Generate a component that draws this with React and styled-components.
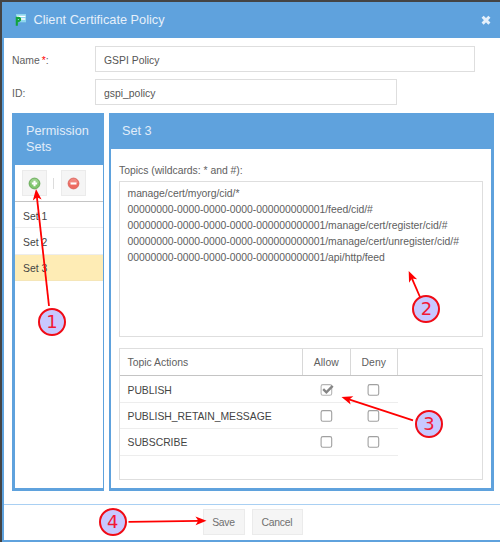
import React, { useState } from "react";
import styled, { createGlobalStyle } from "styled-components";

const GlobalStyle = createGlobalStyle`
  * {
    box-sizing: border-box;
  }

  body {
    margin: 0;
    background-color: #444;
    font-family: "Liberation Sans", Arial, sans-serif;
    font-size: 10.4px;
    color: #606060;
    overflow: hidden;
  }
`;

const Page = styled.div`
  position: relative;
  width: 500px;
  height: 542px;
  padding: 2px 0 0 2px;
`;

const Window = styled.div`
  display: flex;
  flex-direction: column;
  height: 540px;
  border-left: 2px solid #5fa2dd;
  border-bottom: 2px solid #5fa2dd;
  background-color: #fff;
`;

const TitleBar = styled.div`
  display: flex;
  align-items: center;
  height: 36px;
  padding: 0 9px 0 11px;
  background-color: #5fa2dd;
`;

const Title = styled.div`
  flex: 1;
  margin-left: 6.5px;
  font-size: 12.75px;
  line-height: 16px;
  color: #e6f0fa;
`;

const Form = styled.div`
  display: flex;
  flex-direction: column;
  gap: 7px;
  padding: 8px 0 0 8px;
`;

const Field = styled.div`
  display: flex;
  align-items: center;
  height: 26px;
`;

const Label = styled.label`
  width: 83px;
  padding-top: 2px;
`;

const Required = styled.span`
  margin-left: 2px;
  color: #f00;
`;

const Input = styled.input`
  width: ${(props) => props.$width}px;
  height: 26px;
  padding: 2px 8px 0;
  border: 1px solid #dedede;
  outline: none;
  font: inherit;
  color: #555;
`;

const Panels = styled.div`
  display: flex;
  gap: 5px;
  height: 378px;
  margin: 8px 6px 0 8px;
`;

const Panel = styled.div`
  display: flex;
  flex-direction: column;
  ${(props) => (props.$width ? `width: ${props.$width}px;` : "flex: 1;")}
  border: solid #5fa2dd;
  border-width: ${(props) => props.$borders};
`;

const PanelHeader = styled.div`
  height: ${(props) => props.$height}px;
  padding: 10px 0 0 11px;
  background-color: #5fa2dd;
  font-size: 12.7px;
  line-height: 16px;
  color: #e2edf9;
`;

const Toolbar = styled.div`
  display: flex;
  align-items: center;
  height: 37px;
  padding-left: 7px;
  border-bottom: 1px solid #c4c4c4;
`;

const ToolButton = styled.button`
  display: flex;
  align-items: center;
  justify-content: center;
  width: 25px;
  height: 26px;
  padding: 0;
  border: 1px solid #ebebeb;
  background-color: #f5f5f5;
`;

const Separator = styled.div`
  width: 1px;
  height: 11px;
  margin: 0 7px 0 6px;
  background-color: #dcdcdc;
`;

const SetRow = styled.div`
  height: 26.4px;
  padding: 0.6px 0 0 8px;
  border-bottom: 1px solid ${(props) => (props.$selected ? "#f5e6b8" : "#ededed")};
  background-color: ${(props) => (props.$selected ? "#feecb5" : "#fff")};
  line-height: 27px;
  color: #444;
`;

const PanelBody = styled.div`
  display: flex;
  flex-direction: column;
  padding: 15px 8px 0;
`;

const TopicsLabel = styled.label`
  height: 17px;
  line-height: 14px;
  letter-spacing: -0.02px;
`;

const Topics = styled.textarea`
  height: 156px;
  padding: 4px 7.5px;
  border: 1px solid #dedede;
  outline: none;
  resize: none;
  overflow: hidden;
  white-space: pre;
  font: inherit;
  line-height: 15.9px;
  letter-spacing: -0.03px;
  color: #606060;
`;

const Grid = styled.div`
  height: 132px;
  margin-top: 11px;
  border: 1px solid #dedede;
`;

const GridHeader = styled.div`
  display: flex;
  height: 27px;
  margin-bottom: 1px;
  border-bottom: 1px solid #c4c4c4;
  line-height: 27px;
`;

const HeaderCell = styled.div`
  width: ${(props) => props.$width}px;
  padding-left: ${(props) => (props.$center ? 0 : 7.5)}px;
  border-right: 1px solid #d8d8d8;
  text-align: ${(props) => (props.$center ? "center" : "left")};
`;

const GridRow = styled.div`
  display: flex;
  align-items: center;
  width: 278px;
  height: 26.2px;
  border-bottom: 1px solid #ededed;
  color: #444;
`;

const ActionName = styled.div`
  width: 183px;
  padding: 1px 0 0 7.5px;
  letter-spacing: -0.03px;
`;

const CheckCell = styled.div`
  display: flex;
  justify-content: center;
  width: 47.5px;
  cursor: pointer;
`;

const Footer = styled.div`
  display: flex;
  justify-content: center;
  gap: 7px;
  height: 36px;
  margin-top: auto;
  padding: 4px 0 0 1px;
  border-top: 1px solid #a9d0f3;
`;

const FooterButton = styled.button`
  width: ${(props) => props.$width}px;
  height: 26px;
  padding: 0;
  border: 1px solid #ebebeb;
  background-color: #f5f5f5;
  font: inherit;
  letter-spacing: -0.25px;
  color: #707070;
`;

const Arrows = styled.svg`
  position: absolute;
  top: 0;
  left: 0;
  pointer-events: none;
`;

const Callout = styled.div`
  position: absolute;
  left: ${(props) => props.$x - 14}px;
  top: ${(props) => props.$y - 14}px;
  width: 28px;
  height: 28px;
  border: 2px solid #f00b16;
  border-radius: 50%;
  background-color: #c8c8ff;
  font-family: "DejaVu Sans", sans-serif;
  font-size: 18px;
  line-height: 24px;
  text-align: center;
  color: #f21835;
`;

const sets = ["Set 1", "Set 2", "Set 3"];

const uuid = "00000000-0000-0000-0000-000000000001";

const topics = [
  "manage/cert/myorg/cid/*",
  `${uuid}/feed/cid/#`,
  `${uuid}/manage/cert/register/cid/#`,
  `${uuid}/manage/cert/unregister/cid/#`,
  `${uuid}/api/http/feed`,
].join("\n");

const callouts = [
  { x: 52, y: 321.7, from: [49, 306], to: [36, 189] },
  { x: 426.4, y: 309, from: [420, 297], to: [408.7, 271] },
  { x: 429, y: 424, from: [413, 420.3], to: [341.5, 397] },
  { x: 112.7, y: 522.3, from: [128.5, 521.8], to: [206.5, 520.7] },
];

const PolicyIcon = () => (
  <svg width="12" height="12" viewBox="0 0 12 12">
    <rect x="1" y="0" width="10" height="8.3" fill="#8fd6ee" />
    <path d="M2 2.4h8.4M5.5 5h4.7" stroke="#fff" strokeWidth="1.3" />
    <path
      d="M1.8 2.8v9M1.8 3.9h1.7a1.5 1.5 0 0 1 0 3.2H1.8"
      fill="none"
      stroke="#12a33c"
      strokeWidth="2.1"
    />
  </svg>
);

const CloseIcon = () => (
  <svg width="10" height="10" viewBox="0 0 10 10">
    <path d="M1.6 1.8l6.8 6.8M8.4 1.8L1.6 8.6" stroke="#e5f0fb" strokeWidth="3" />
  </svg>
);

const RoundIcon = ({ plus }) => (
  <svg width="13" height="13" viewBox="0 0 13 13">
    <circle
      cx="6.5"
      cy="6.5"
      r="5.4"
      fill={plus ? "#80c56d" : "#ee6a60"}
      stroke={plus ? "#63a653" : "#d9645c"}
      strokeWidth="0.9"
    />
    <path d="M2.1 6a4.4 4.4 0 0 1 8.8 0z" fill="#fff" opacity="0.2" />
    <path
      d={plus ? "M3.8 6.5h5.4M6.5 3.8v5.4" : "M3.5 6.5h6"}
      stroke="#fff"
      strokeWidth="2.1"
    />
  </svg>
);

const CheckBox = ({ checked }) => (
  <svg width="14" height="12" viewBox="0 0 14 12">
    <rect
      x="1.1"
      y="0.6"
      width="10.6"
      height="10.6"
      rx="1.8"
      fill="#fff"
      stroke={checked ? "#b5b5b5" : "#a0a0a0"}
      strokeWidth="1.1"
    />
    {checked && (
      <path d="M3.2 5.1l3.2 3.2L12.7 1.8" fill="none" stroke="#858585" strokeWidth="2.4" />
    )}
  </svg>
);

const Arrow = ({ from, to }) => {
  const angle = Math.atan2(to[1] - from[1], to[0] - from[0]);
  const tailX = to[0] - 7 * Math.cos(angle);
  const tailY = to[1] - 7 * Math.sin(angle);

  return (
    <g>
      <line
        x1={from[0]}
        y1={from[1]}
        x2={tailX}
        y2={tailY}
        stroke="#f00"
        strokeWidth="1.8"
      />
      <path
        d="M0 0L-11 4.4L-8.2 0L-11 -4.4Z"
        fill="#f00"
        transform={`translate(${to[0]} ${to[1]}) rotate(${(angle * 180) / Math.PI})`}
      />
    </g>
  );
};

const App = () => {
  const [selected, setSelected] = useState("Set 3");
  const [actions, setActions] = useState([
    { name: "PUBLISH", allow: true, deny: false },
    { name: "PUBLISH_RETAIN_MESSAGE", allow: false, deny: false },
    { name: "SUBSCRIBE", allow: false, deny: false },
  ]);

  const toggle = (name, key) => {
    setActions((prev) =>
      prev.map((a) => (a.name === name ? { ...a, [key]: !a[key] } : a))
    );
  };

  return (
    <Page>
      <GlobalStyle />
      <Window>
        <TitleBar>
          <PolicyIcon />
          <Title>Client Certificate Policy</Title>
          <CloseIcon />
        </TitleBar>
        <Form>
          <Field>
            <Label>
              Name<Required>*</Required>:
            </Label>
            <Input $width={380} defaultValue="GSPI Policy" />
          </Field>
          <Field>
            <Label>ID:</Label>
            <Input $width={302} defaultValue="gspi_policy" />
          </Field>
        </Form>
        <Panels>
          <Panel $width={92} $borders="0 1px 3px 3px">
            <PanelHeader $height={52}>
              Permission
              <br />
              Sets
            </PanelHeader>
            <Toolbar>
              <ToolButton>
                <RoundIcon plus />
              </ToolButton>
              <Separator />
              <ToolButton>
                <RoundIcon />
              </ToolButton>
            </Toolbar>
            {sets.map((name) => (
              <SetRow
                key={name}
                $selected={name === selected}
                onClick={() => setSelected(name)}
              >
                {name}
              </SetRow>
            ))}
          </Panel>
          <Panel $borders="0 3px 3px 2px">
            <PanelHeader $height={36}>{selected}</PanelHeader>
            <PanelBody>
              <TopicsLabel>Topics (wildcards: * and #):</TopicsLabel>
              <Topics defaultValue={topics} spellCheck={false} />
              <Grid>
                <GridHeader>
                  <HeaderCell $width={183}>Topic Actions</HeaderCell>
                  <HeaderCell $width={47.5} $center>
                    Allow
                  </HeaderCell>
                  <HeaderCell $width={47.5} $center>
                    Deny
                  </HeaderCell>
                </GridHeader>
                {actions.map((a) => (
                  <GridRow key={a.name}>
                    <ActionName>{a.name}</ActionName>
                    <CheckCell onClick={() => toggle(a.name, "allow")}>
                      <CheckBox checked={a.allow} />
                    </CheckCell>
                    <CheckCell onClick={() => toggle(a.name, "deny")}>
                      <CheckBox checked={a.deny} />
                    </CheckCell>
                  </GridRow>
                ))}
              </Grid>
            </PanelBody>
          </Panel>
        </Panels>
        <Footer>
          <FooterButton $width={42}>Save</FooterButton>
          <FooterButton $width={51}>Cancel</FooterButton>
        </Footer>
      </Window>
      <Arrows width="500" height="542">
        {callouts.map((c, i) => (
          <Arrow key={i} from={c.from} to={c.to} />
        ))}
      </Arrows>
      {callouts.map((c, i) => (
        <Callout key={i} $x={c.x} $y={c.y}>
          {i + 1}
        </Callout>
      ))}
    </Page>
  );
};

export default App;
